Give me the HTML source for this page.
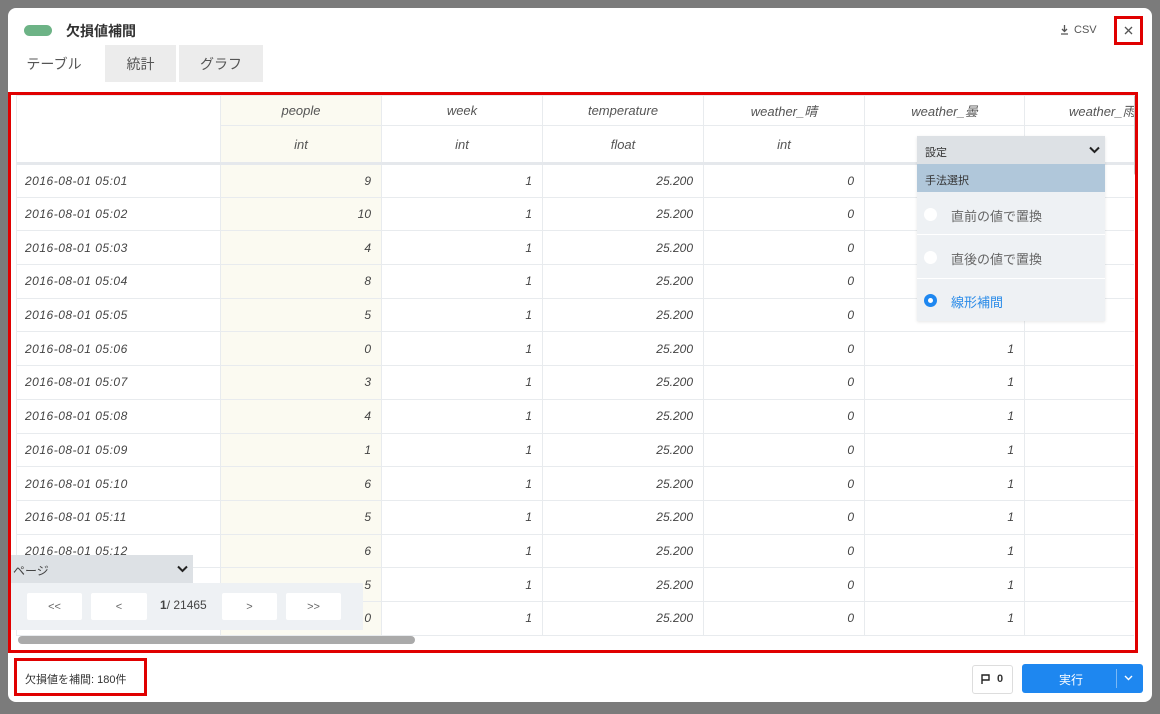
<!DOCTYPE html>
<html><head><meta charset="utf-8"><style>
*{box-sizing:border-box;margin:0;padding:0}
body{width:1160px;height:714px;background:#7b7b7b;position:relative;overflow:hidden;font-family:"Liberation Sans","Noto Sans CJK JP",sans-serif;color:#333}
.modal{position:absolute;left:8px;top:8px;width:1144px;height:694px;background:#fff;border-radius:8px}
.abs{position:absolute}
.tab{position:absolute;top:45px;height:37px;font-size:14px;color:#555;display:flex;align-items:center;justify-content:center}
.red{position:absolute;border:3px solid #e00000}
.clip{position:absolute;left:16px;top:95px;width:1118px;height:545px;overflow:hidden}
table{border-collapse:collapse;table-layout:fixed;position:absolute;left:0;top:0;width:1200px;font-style:italic;font-size:12px;color:#444}
td{border:1px solid #e8ebee;height:33.7px;padding:0 10px;text-align:right;overflow:hidden;white-space:nowrap}
td.i{text-align:left;padding-left:8px;font-size:12px;letter-spacing:.5px}
td.p{background:#fbfaf1}
tr.h td{text-align:center;font-size:13px;color:#555}
.pb{position:absolute;top:593px;height:27px;background:#fff;font-size:11px;color:#666;display:flex;align-items:center;justify-content:center;border-radius:2px}
</style></head><body>
<div class="modal"></div>
<div class="abs" style="left:24px;top:25px;width:28px;height:11px;background:#6db386;border-radius:6px"></div>
<div class="abs" style="left:66px;top:21px;font-size:14px;font-weight:bold;color:#333">欠損値補間</div>
<svg class="abs" style="left:1060px;top:25px" width="9" height="10" viewBox="0 0 9 10"><path d="M4.5 0v6M2 4l2.5 2.5L7 4M1 9h7" stroke="#555" stroke-width="1.3" fill="none"/></svg>
<div class="abs" style="left:1074px;top:24px;font-size:11px;color:#555">CSV</div>
<div class="red" style="left:1114px;top:16px;width:29px;height:29px"></div>
<svg class="abs" style="left:1124px;top:26px" width="9" height="9" viewBox="0 0 9 9"><path d="M1 1l7 7M8 1l-7 7" stroke="#555" stroke-width="1.3"/></svg>
<div class="tab" style="left:16px;width:76px;">テーブル</div>
<div class="tab" style="left:105px;width:71px;background:#ececec">統計</div>
<div class="tab" style="left:179px;width:84px;background:#ececec">グラフ</div>

<div class="clip">
<table>
<colgroup><col style="width:204px"><col style="width:161px"><col style="width:161px"><col style="width:161px"><col style="width:161px"><col style="width:160px"><col style="width:192px"></colgroup>
<tr class="h"><td style="height:30px;border-bottom:none"></td><td class="p" style="height:30px">people</td><td style="height:30px">week</td><td style="height:30px">temperature</td><td style="height:30px">weather_晴</td><td style="height:30px">weather_曇</td><td style="height:30px;text-align:left;padding-left:44px">weather_雨</td></tr>
<tr class="h"><td style="height:38px;border-top:none;border-bottom:3px solid #e5e8ec"></td><td class="p" style="height:38px;border-bottom:3px solid #e5e8ec">int</td><td style="height:38px;border-bottom:3px solid #e5e8ec">int</td><td style="height:38px;border-bottom:3px solid #e5e8ec">float</td><td style="height:38px;border-bottom:3px solid #e5e8ec">int</td><td style="height:38px;border-bottom:3px solid #e5e8ec">int</td><td style="height:38px;border-bottom:3px solid #e5e8ec;text-align:left;padding-left:62px">int</td></tr>
<tr><td class="i">2016-08-01 05:01</td><td class="p">9</td><td>1</td><td>25.200</td><td>0</td><td>1</td><td></td></tr>
<tr><td class="i">2016-08-01 05:02</td><td class="p">10</td><td>1</td><td>25.200</td><td>0</td><td>1</td><td></td></tr>
<tr><td class="i">2016-08-01 05:03</td><td class="p">4</td><td>1</td><td>25.200</td><td>0</td><td>1</td><td></td></tr>
<tr><td class="i">2016-08-01 05:04</td><td class="p">8</td><td>1</td><td>25.200</td><td>0</td><td>1</td><td></td></tr>
<tr><td class="i">2016-08-01 05:05</td><td class="p">5</td><td>1</td><td>25.200</td><td>0</td><td>1</td><td></td></tr>
<tr><td class="i">2016-08-01 05:06</td><td class="p">0</td><td>1</td><td>25.200</td><td>0</td><td>1</td><td></td></tr>
<tr><td class="i">2016-08-01 05:07</td><td class="p">3</td><td>1</td><td>25.200</td><td>0</td><td>1</td><td></td></tr>
<tr><td class="i">2016-08-01 05:08</td><td class="p">4</td><td>1</td><td>25.200</td><td>0</td><td>1</td><td></td></tr>
<tr><td class="i">2016-08-01 05:09</td><td class="p">1</td><td>1</td><td>25.200</td><td>0</td><td>1</td><td></td></tr>
<tr><td class="i">2016-08-01 05:10</td><td class="p">6</td><td>1</td><td>25.200</td><td>0</td><td>1</td><td></td></tr>
<tr><td class="i">2016-08-01 05:11</td><td class="p">5</td><td>1</td><td>25.200</td><td>0</td><td>1</td><td></td></tr>
<tr><td class="i">2016-08-01 05:12</td><td class="p">6</td><td>1</td><td>25.200</td><td>0</td><td>1</td><td></td></tr>
<tr><td class="i">2016-08-01 05:13</td><td class="p">5</td><td>1</td><td>25.200</td><td>0</td><td>1</td><td></td></tr>
<tr><td class="i">2016-08-01 05:14</td><td class="p">0</td><td>1</td><td>25.200</td><td>0</td><td>1</td><td></td></tr>
</table>
</div>
<div class="abs" style="left:1134px;top:95px;width:4px;height:80px;background:#c8c8c8;border-radius:2px"></div>
<div class="abs" style="left:11px;top:636px;width:1124px;height:14px;background:#fff"></div>
<div class="abs" style="left:18px;top:636px;width:397px;height:8px;background:#aaa;border-radius:4px"></div>

<!-- settings popup -->
<div class="abs" style="left:917px;top:136px;width:188px;height:185px;background:#eef1f4;box-shadow:0 1px 3px rgba(0,0,0,.1)"></div>
<div class="abs" style="left:917px;top:136px;width:188px;height:28px;background:#dde1e5;font-size:11px;padding:8px 0 0 8px;color:#333">設定</div>
<svg class="abs" style="left:1089px;top:146px" width="11" height="8" viewBox="0 0 11 8"><path d="M1 1.5l4.5 4.5 4.5-4.5" stroke="#222" stroke-width="2" fill="none"/></svg>
<div class="abs" style="left:917px;top:164px;width:188px;height:28px;background:#b0c7da;font-size:11px;padding:8px 0 0 8px;color:#333">手法選択</div>
<div class="abs" style="left:917px;top:234px;width:188px;height:1px;background:#fff"></div>
<div class="abs" style="left:917px;top:278px;width:188px;height:1px;background:#fff"></div>
<div class="abs" style="left:924px;top:208px;width:13px;height:13px;border-radius:50%;background:#fff"></div>
<div class="abs" style="left:951px;top:206px;font-size:13px;color:#666">直前の値で置換</div>
<div class="abs" style="left:924px;top:251px;width:13px;height:13px;border-radius:50%;background:#fff"></div>
<div class="abs" style="left:951px;top:249px;font-size:13px;color:#666">直後の値で置換</div>
<div class="abs" style="left:924px;top:294px;width:13px;height:13px;border-radius:50%;background:#1e87f0;border:4px solid #1e87f0"><div style="width:5px;height:5px;background:#fff;border-radius:50%"></div></div>
<div class="abs" style="left:951px;top:292px;font-size:13px;color:#2a8be8">線形補間</div>

<!-- pager -->
<div class="abs" style="left:11px;top:555px;width:182px;height:28px;background:#dde1e5;font-size:12px;padding:7px 0 0 2px;color:#444">ページ</div>
<svg class="abs" style="left:177px;top:565px" width="11" height="8" viewBox="0 0 11 8"><path d="M1 1.5l4.5 4.5 4.5-4.5" stroke="#222" stroke-width="2" fill="none"/></svg>
<div class="abs" style="left:11px;top:583px;width:352px;height:47px;background:#eef1f4"></div>
<div class="pb" style="left:27px;width:55px">&lt;&lt;</div>
<div class="pb" style="left:91px;width:56px">&lt;</div>
<div class="abs" style="left:160px;top:598px;font-size:12px;color:#444"><b>1</b>/ 21465</div>
<div class="pb" style="left:222px;width:55px">&gt;</div>
<div class="pb" style="left:286px;width:55px">&gt;&gt;</div>

<div class="red" style="left:8px;top:92px;width:1130px;height:561px"></div>

<div class="red" style="left:14px;top:658px;width:133px;height:38px"></div>
<div class="abs" style="left:25px;top:671px;font-size:11px;color:#333">欠損値を補間: 180件</div>
<div class="abs" style="left:972px;top:665px;width:41px;height:29px;border:1px solid #ddd;border-radius:3px"></div>
<svg class="abs" style="left:981px;top:674px" width="9" height="10" viewBox="0 0 9 10"><path d="M1 10V1h7v5H1" stroke="#222" stroke-width="1.4" fill="none"/></svg>
<div class="abs" style="left:997px;top:673px;font-size:11px;font-weight:bold;color:#333">0</div>
<div class="abs" style="left:1022px;top:664px;width:121px;height:29px;background:#1e87f0;border-radius:3px;color:#fff;font-size:12px"><span style="position:absolute;left:37px;top:7px">実行</span><span style="position:absolute;left:94px;top:5px;width:1px;height:19px;background:#7bb8f5"></span></div>
<svg class="abs" style="left:1124px;top:675px" width="9" height="6" viewBox="0 0 9 6"><path d="M1 1l3.5 3.5L8 1" stroke="#fff" stroke-width="1.4" fill="none"/></svg>
</body></html>
